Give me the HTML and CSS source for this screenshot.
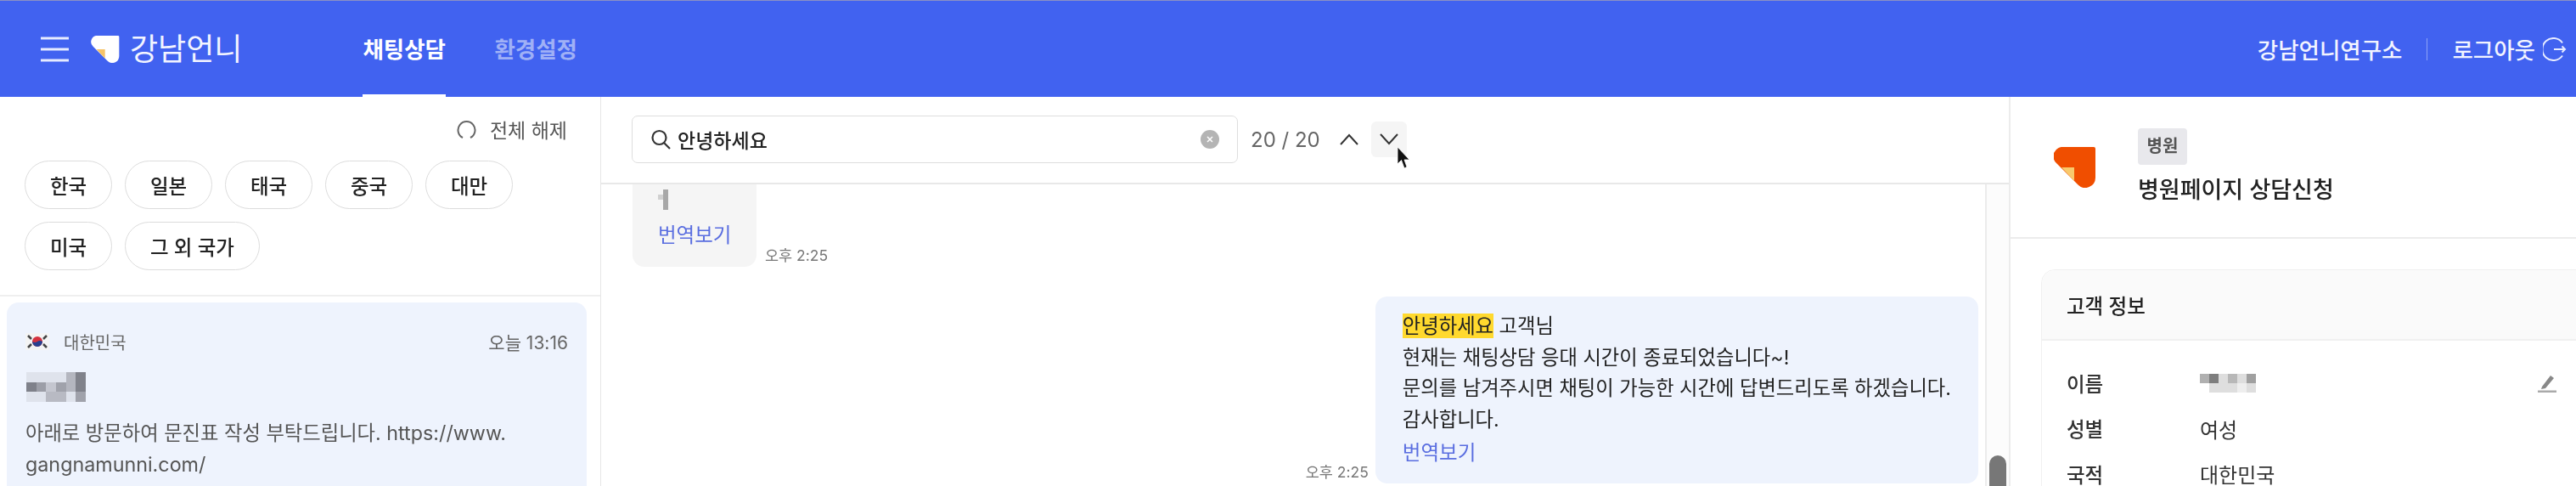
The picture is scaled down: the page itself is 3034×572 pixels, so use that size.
FILE: index.html
```html
<!DOCTYPE html>
<html lang="ko">
<head>
  <meta charset="UTF-8">
  <title>강남언니 채팅상담</title>
  <link rel="stylesheet" href="styles.css">
</head>
<body>
  <div class="app">
    <header class="header">
      <svg class="menu" width="33" height="30" viewBox="0 0 33 30"><path d="M0 2H33M0 15H33M0 28H33" stroke="#e6ebff" stroke-width="3"/></svg>
      <svg class="brand-logo" width="34" height="32" viewBox="0 0 49 48"><path d="M12 0H47a2 2 0 0 1 2 2V36a12 12 0 0 1-20.500 8.500L3 19A11 11 0 0 1 12 0Z" fill="#fff"/><path d="M9 24H24V40Z" fill="#f6c368"/></svg>
      <span class="brand-name">강남언니</span>
      <nav class="nav">
        <a class="nav-item active">채팅상담</a>
        <a class="nav-item">환경설정</a>
      </nav>
      <div class="header-right">
        <span>강남언니연구소</span>
        <i class="sep"></i>
        <span>로그아웃</span>
        <svg width="28" height="28" viewBox="0 0 28 28" fill="none" stroke="#e6ebff" stroke-width="2"><path d="M23 6.500A13 13 0 1 0 23 21.500"/><path d="M13 14H26M22.500 10.500 26 14 22.500 17.500"/></svg>
      </div>
    </header>

    <div class="columns">
      <aside class="left">
        <div class="filters">
          <div class="reset">
            <svg width="23" height="23" viewBox="0 0 23 23" fill="none" stroke="#666" stroke-width="2"><path d="M7 21A10 10 0 1 1 16 21"/></svg>
            <span>전체 해제</span>
          </div>
          <div class="chips">
            <span class="chip">한국</span>
            <span class="chip">일본</span>
            <span class="chip">태국</span>
            <span class="chip">중국</span>
            <span class="chip">대만</span>
            <span class="chip">미국</span>
            <span class="chip wide">그 외 국가</span>
          </div>
        </div>
        <div class="room">
          <div class="room-top">
            <svg class="flag" width="28" height="20" viewBox="0 0 28 20">
              <rect width="28" height="20" fill="#f4f4f4"/>
              <path d="M3 3 7 7M3 17 7 13M25 3 21 7M25 17 21 13" stroke="#444" stroke-width="2.500"/>
              <circle cx="14" cy="10" r="6" fill="#d4323f"/>
              <path d="M8 10A6 6 0 0 0 20 10Q17 8 14 10T8 10Z" fill="#27408f"/>
            </svg>
            <span class="country">대한민국</span>
            <span class="room-time">오늘 13:16</span>
          </div>
          <svg class="blur-name" width="72" height="35" viewBox="0 0 6 3" shape-rendering="crispEdges">
            <rect width="6" height="3" fill="#dfe3ec"/>
            <rect x="0" y="1" width="1" height="1" fill="#7f818a"/>
            <rect x="1" y="1" width="1" height="1" fill="#9c9ea7"/>
            <rect x="2" y="1" width="1" height="1" fill="#c4c6cf"/>
            <rect x="3" y="1" width="1" height="1" fill="#a0a2ab"/>
            <rect x="4" y="0" width="1" height="2" fill="#b4b6bf"/>
            <rect x="5" y="0" width="1" height="2" fill="#80828b"/>
            <rect x="2" y="2" width="2" height="1" fill="#b8bac3"/>
            <rect x="5" y="2" width="1" height="1" fill="#a0a2ab"/>
          </svg>
          <p class="room-msg">아래로 방문하여 문진표 작성 부탁드립니다. https://www.<br>gangnamunni.com/</p>
        </div>
      </aside>

      <main class="chat">
        <div class="search-bar">
          <div class="search-box">
            <svg width="25" height="24" viewBox="0 0 25 24" fill="none" stroke="#333" stroke-width="2.200"><circle cx="10.500" cy="10" r="8"/><path d="M16 16 23 23"/></svg>
            <span class="search-text">안녕하세요</span>
            <svg class="clear" width="22" height="22" viewBox="0 0 22 22"><circle cx="11" cy="11" r="11" fill="#b4b4b4"/><path d="M8 8 14 14M14 8 8 14" stroke="#fff" stroke-width="1.500"/></svg>
          </div>
          <span class="count">20 / 20</span>
          <button class="arrow"><svg width="22" height="14" viewBox="0 0 22 14" fill="none" stroke="#333" stroke-width="2"><path d="M1 13 11 2 21 13"/></svg></button>
          <button class="arrow hover"><svg width="22" height="14" viewBox="0 0 22 14" fill="none" stroke="#333" stroke-width="2"><path d="M1 1 11 12 21 1"/></svg></button>
          <svg class="cursor" width="15" height="26" viewBox="0 0 15 26"><path d="M1 0V20L5.500 15.500 9 25 12 23.500 9 15H15Z" fill="#111" stroke="#fff" stroke-width=".8"/></svg>
        </div>
        <div class="chat-body">
          <div class="messages">
            <div class="msg">
              <div class="bubble small">
                <svg class="blur-one" width="12" height="24" viewBox="0 0 2 4" shape-rendering="crispEdges">
                  <rect x="1" width="1" height="4" fill="#a8a8a8"/>
                  <rect y="1" width="1" height="1" fill="#d0d0d0"/>
                </svg>
                <a class="translate">번역보기</a>
              </div>
              <span class="time">오후 2:25</span>
            </div>
            <div class="msg mine">
              <span class="time">오후 2:25</span>
              <div class="bubble">
                <mark class="hit">안녕하세요</mark> 고객님<br>
                현재는 채팅상담 응대 시간이 종료되었습니다~!<br>
                문의를 남겨주시면 채팅이 가능한 시간에 답변드리도록 하겠습니다.<br>
                감사합니다.
                <a class="translate">번역보기</a>
              </div>
            </div>
          </div>
          <div class="scrollbar"><i class="thumb"></i></div>
        </div>
      </main>

      <aside class="right">
        <div class="source">
          <svg width="49" height="48" viewBox="0 0 49 48"><path d="M12 0H47a2 2 0 0 1 2 2V36a12 12 0 0 1-20.500 8.500L3 19A11 11 0 0 1 12 0Z" fill="#f04e00"/><path d="M9 24H24V40Z" fill="#f8c96c"/></svg>
          <div class="source-info">
            <span class="badge">병원</span>
            <div class="source-title">병원페이지 상담신청</div>
          </div>
        </div>
        <section class="info">
          <h3 class="info-head">고객 정보</h3>
          <div class="info-rows">
            <div class="info-row">
              <span class="label">이름</span>
              <svg width="66" height="24" viewBox="0 0 6 2" shape-rendering="crispEdges">
                <rect width="6" height="2" fill="#dedede"/>
                <rect x="0" y="0" width="1" height="1" fill="#b0b0b0"/>
                <rect x="1" y="0" width="1" height="1" fill="#7e7e7e"/>
                <rect x="3" y="0" width="1" height="1" fill="#b8b8b8"/>
                <rect x="5" y="0" width="1" height="1" fill="#a0a0a0"/>
                <rect x="0" y="1" width="1" height="1" fill="#fff"/>
                <rect x="4" y="1" width="1" height="1" fill="#eee"/>
              </svg>
              <svg class="edit" width="22" height="22" viewBox="0 0 22 22"><path d="M5 15 15 2 19 5 9 17 4 18Z" fill="#888"/><rect y="19.500" width="22" height="2.500" fill="#aaa"/></svg>
            </div>
            <div class="info-row"><span class="label">성별</span><span>여성</span></div>
            <div class="info-row"><span class="label">국적</span><span>대한민국</span></div>
          </div>
        </section>
      </aside>
    </div>
  </div>
</body>
</html>
```

FILE: styles.css
```css
* {
  box-sizing: border-box;
}
html, body {
  margin: 0;
  height: 572px;
  overflow: hidden;
  background: #fff;
}
body {
  font-family: Inter, "Noto Sans CJK KR", sans-serif;
  font-size: 22px;
  color: #333;
}
.app {
  height: 572px;
  display: flex;
  flex-direction: column;
  filter: blur(0.5px);
}

/* header */
.header {
  height: 114px;
  flex-shrink: 0;
  display: flex;
  align-items: center;
  padding: 0 11px 0 48px;
  background: #4162f0;
  border-top: 1px solid #8b90c4;
  color: #f2f4ff;
}
.brand-logo {
  margin-left: 26px;
}
.brand-name {
  margin-left: 12px;
  font-size: 36px;
  font-weight: 400;
  line-height: 1;
}
.nav {
  align-self: stretch;
  display: flex;
  gap: 57px;
  margin-left: 142px;
}
.nav-item {
  display: flex;
  align-items: center;
  width: 98px;
  white-space: nowrap;
  font-size: 26.500px;
  font-weight: 700;
  color: #9fb0f6;
  border-bottom: 3px solid transparent;
}
.nav-item.active {
  color: #fff;
  border-bottom-color: #fff;
}
.header-right {
  margin-left: auto;
  display: flex;
  align-items: center;
  font-size: 26.500px;
  font-weight: 500;
}
.sep {
  width: 1px;
  height: 26px;
  margin: 0 29px;
  background: #8fa3f6;
}
.header-right svg {
  margin-left: 9px;
}

.columns {
  flex: 1;
  min-height: 0;
  display: flex;
}

/* left list */
.left {
  width: 708px;
  flex-shrink: 0;
  border-right: 1px solid #e6e6e6;
}
.filters {
  height: 235px;
  padding: 26px 39px 0 29px;
  border-bottom: 2px solid #efefef;
}
.reset {
  height: 24px;
  display: flex;
  justify-content: flex-end;
  align-items: center;
  gap: 16px;
  font-size: 23px;
  color: #555;
}
.chips {
  display: flex;
  flex-wrap: wrap;
  gap: 15px;
  margin-top: 25px;
}
.chip {
  width: 103px;
  height: 57px;
  display: flex;
  align-items: center;
  justify-content: center;
  border: 1px solid #dcdcdc;
  border-radius: 29px;
  font-size: 23.500px;
  font-weight: 500;
  color: #222;
}
.chip.wide {
  width: 159px;
}
.room {
  height: 220px;
  margin: 7px 16px 0 8px;
  padding: 34px 22px 0;
  background: #eef3fd;
  border-radius: 14px 14px 0 0;
}
.room-top {
  display: flex;
  align-items: center;
  height: 24px;
}
.country {
  margin-left: 17px;
  font-size: 20px;
  color: #666;
}
.room-time {
  margin-left: auto;
  font-size: 21px;
  color: #666;
}
.blur-name {
  display: block;
  margin-top: 24px;
}
.room-msg {
  margin: 18px 0 0;
  font-size: 23.300px;
  line-height: 37px;
  color: #555;
  white-space: nowrap;
}

/* chat */
.chat {
  width: 1660px;
  flex-shrink: 0;
  display: flex;
  flex-direction: column;
  border-right: 2px solid #ececec;
}
.search-bar {
  position: relative;
  height: 103px;
  flex-shrink: 0;
  display: flex;
  align-items: center;
  padding: 0 0 1px 36px;
  border-bottom: 2px solid #e8e8e8;
}
.search-box {
  width: 714px;
  height: 56px;
  display: flex;
  align-items: center;
  padding: 0 21px;
  border: 1px solid #dedede;
  border-radius: 7px;
}
.search-text {
  margin-left: 7px;
  font-size: 23px;
  font-weight: 500;
  color: #222;
}
.clear {
  margin-left: auto;
}
.count {
  margin-left: 15px;
  width: 80px;
  white-space: nowrap;
  font-size: 24px;
  color: #666;
}
.arrow {
  width: 42px;
  height: 42px;
  padding: 0;
  display: flex;
  align-items: center;
  justify-content: center;
  border: 0;
  border-radius: 6px;
  background: none;
}
.arrow:first-of-type {
  margin-left: 15px;
}
.arrow.hover {
  margin-left: 5px;
  background: #f5f5f5;
}
.cursor {
  position: absolute;
  left: 937px;
  top: 59px;
}
.chat-body {
  flex: 1;
  min-height: 0;
  display: flex;
}
.messages {
  flex: 1;
  padding: 0 8px 0 37px;
}
.msg {
  display: flex;
  align-items: flex-end;
  gap: 10px;
}
.msg.mine {
  justify-content: flex-end;
  margin-top: 35px;
  gap: 8px;
}
.bubble {
  padding: 17px 32px;
  background: #eef3fd;
  border-radius: 14px;
  font-size: 23.300px;
  line-height: 36.500px;
  color: #222;
  white-space: nowrap;
}
.bubble.small {
  width: 146px;
  height: 97px;
  padding: 6px 30px 0;
  background: #f5f5f5;
  border-radius: 0 0 14px 14px;
}
.blur-one {
  display: block;
}
.translate {
  display: block;
  margin-top: 3px;
  font-size: 23.500px;
  color: #5a6ee0;
}
.bubble.small .translate {
  margin-top: 12px;
}
.hit {
  background: #ffd92e;
  color: #222;
}
.time {
  padding-bottom: 3px;
  font-size: 17.500px;
  line-height: 20px;
  color: #777;
  white-space: nowrap;
}
.scrollbar {
  position: relative;
  width: 28px;
  flex-shrink: 0;
  background: #fcfcfc;
  border-left: 2px solid #ececec;
}
.thumb {
  position: absolute;
  left: 3px;
  top: 319px;
  width: 20px;
  height: 60px;
  background: #777;
  border-radius: 10px;
}

/* right info */
.right {
  flex: 1;
  min-width: 0;
  overflow: hidden;
}
.source {
  height: 167px;
  display: flex;
  align-items: center;
  gap: 50px;
  padding-left: 51px;
  border-bottom: 2px solid #ececec;
}
.source-info {
  margin-top: -2px;
}
.badge {
  display: block;
  width: 58px;
  height: 43px;
  line-height: 43px;
  text-align: center;
  font-size: 20px;
  font-weight: 700;
  color: #555;
  background: #e8e8ec;
  border-radius: 4px;
}
.source-title {
  margin-top: 13px;
  font-size: 27px;
  line-height: 34px;
  font-weight: 500;
  color: #222;
  white-space: nowrap;
}
.info {
  width: 660px;
  margin: 36px 0 0 36px;
  border: 1px solid #f0f0f0;
  border-radius: 16px 0 0 0;
}
.info-head {
  margin: 0;
  height: 83px;
  padding-left: 29px;
  display: flex;
  align-items: center;
  font-size: 23.500px;
  font-weight: 500;
  color: #222;
  background: #fafafa;
  border-bottom: 2px solid #f0f0f0;
  border-radius: 16px 0 0 0;
}
.info-rows {
  padding: 23px 52px 0 29px;
}
.info-row {
  height: 53.500px;
  display: flex;
  align-items: center;
  font-size: 24px;
  color: #333;
}
.label {
  width: 157px;
  font-size: 23.500px;
  font-weight: 500;
}
.edit {
  margin-left: auto;
}
```
